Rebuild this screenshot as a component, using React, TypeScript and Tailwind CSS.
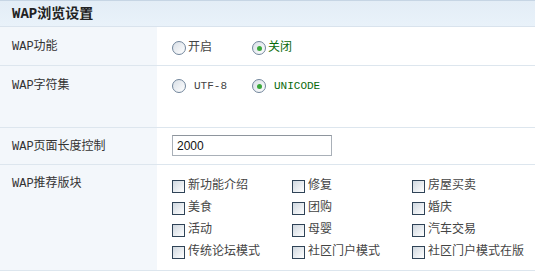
const cjk = "font-['Liberation_Mono','Noto_Sans_CJK_SC',monospace]";

function Radio({ label, checked, mono }: { label: string; checked?: boolean; mono?: boolean }) {
  return (
    <label className="flex w-[80px] items-center">
      <span className="relative flex h-[14px] w-[14px] items-center justify-center rounded-full border border-[#71859b] bg-gradient-to-br from-[#d9dfe6] to-white">
        {checked && <span className="h-[5px] w-[5px] rounded-full bg-[#3aa83a]" />}
      </span>
      <span
        className={`${mono ? "ml-[8px] font-['Liberation_Mono',monospace] text-[11px]" : "ml-[2px] text-[12px]"} ${
          checked ? "text-[#0a6a0a]" : "text-[#444]"
        }`}
      >
        {label}
      </span>
    </label>
  );
}

function Check({ label }: { label: string }) {
  return (
    <label className="flex h-[22px] w-[120px] items-center">
      <span className="h-[13px] w-[13px] border border-[#2f4357] bg-gradient-to-br from-[#d0d8e0] to-white" />
      <span className="ml-[3px] text-[12px] text-[#444]">{label}</span>
    </label>
  );
}

const boards = [
  "新功能介绍", "修复", "房屋买卖",
  "美食", "团购", "婚庆",
  "活动", "母婴", "汽车交易",
  "传统论坛模式", "社区门户模式", "社区门户模式在版",
];

export default function App() {
  return (
    <div className={`h-[273px] w-[535px] bg-white ${cjk} text-[12px] leading-4 text-[#333]`}>
      <div className="flex h-[27px] items-center border-t border-b border-t-[#c6d5e4] border-b-[#d9e3ed] bg-gradient-to-b from-[#e3edf6] to-[#e9f2fa] pl-3 text-[14px] font-bold text-[#222]">
        WAP浏览设置
      </div>
      <div className="grid grid-cols-[157px_1fr]">
        <div className="h-[39px] border-b border-[#dde6ee] bg-[#f3f7fb] pl-3 pt-[12px]">WAP功能</div>
        <div className="flex h-[39px] items-start border-b border-[#dde6ee] pl-[15px] pt-[13px]">
          <Radio label="开启" />
          <Radio label="关闭" checked />
        </div>

        <div className="h-[62px] border-b border-[#dde6ee] bg-[#f3f7fb] pl-3 pt-[12px]">WAP字符集</div>
        <div className="flex h-[62px] items-start border-b border-[#dde6ee] pl-[15px] pt-[12px]">
          <Radio label="UTF-8" mono />
          <Radio label="UNICODE" checked mono />
        </div>

        <div className="h-[37px] border-b border-[#dde6ee] bg-[#f3f7fb] pl-3 pt-[11px]">WAP页面长度控制</div>
        <div className="h-[37px] border-b border-[#dde6ee] pl-[15px] pt-[7px]">
          <input
            defaultValue="2000"
            className="h-[21px] w-[160px] border border-[#a9b0b8] border-t-[#8e959d] bg-white px-[4px] font-['Liberation_Sans',sans-serif] text-[12px] text-[#111] outline-none"
          />
        </div>

        <div className="h-[106px] border-b border-[#dde6ee] bg-[#f3f7fb] pl-3 pt-[11px]">WAP推荐版块</div>
        <div className="grid h-[106px] grid-cols-[120px_120px_1fr] content-start border-b border-[#dde6ee] pl-[15px] pt-[10px]">
          {boards.map((b) => (
            <Check key={b} label={b} />
          ))}
        </div>
      </div>
    </div>
  );
}
